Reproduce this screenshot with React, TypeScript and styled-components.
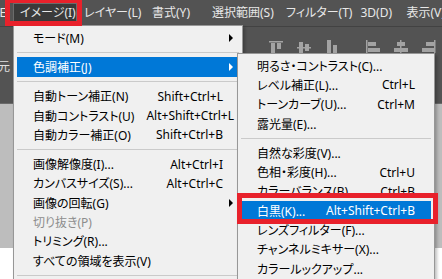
import React from 'react'
import styled, { createGlobalStyle } from 'styled-components'

const GlobalStyle = createGlobalStyle`
  html, body {
    margin: 0;
    padding: 0;
    background: #535353;
    overflow: hidden;
  }
  body {
    font-family: "Noto Sans", "Noto Sans CJK JP", sans-serif;
    font-feature-settings: "palt";
    -webkit-font-smoothing: antialiased;
  }
`

type Entry =
  | { kind: 'sep' }
  | {
      kind: 'item'
      label: string
      shortcut?: string
      sub?: boolean
      disabled?: boolean
      active?: boolean
    }

// top menu: label and slot width
const bar: [string, number][] = [
  ['編集(E)', 48],
  ['イメージ(I)', 64],
  ['レイヤー(L)', 68],
  ['書式(Y)', 60],
  ['選択範囲(S)', 74],
  ['フィルター(T)', 74],
  ['3D(D)', 46],
  ['表示(V)', 60],
]

const imageMenu: Entry[] = [
  { kind: 'item', label: 'モード(M)', sub: true },
  { kind: 'sep' },
  { kind: 'item', label: '色調補正(J)', sub: true, active: true },
  { kind: 'sep' },
  { kind: 'item', label: '自動トーン補正(N)', shortcut: 'Shift+Ctrl+L' },
  { kind: 'item', label: '自動コントラスト(U)', shortcut: 'Alt+Shift+Ctrl+L' },
  { kind: 'item', label: '自動カラー補正(O)', shortcut: 'Shift+Ctrl+B' },
  { kind: 'sep' },
  { kind: 'item', label: '画像解像度(I)...', shortcut: 'Alt+Ctrl+I' },
  { kind: 'item', label: 'カンバスサイズ(S)...', shortcut: 'Alt+Ctrl+C' },
  { kind: 'item', label: '画像の回転(G)', sub: true },
  { kind: 'item', label: '切り抜き(P)', disabled: true },
  { kind: 'item', label: 'トリミング(R)...' },
  { kind: 'item', label: 'すべての領域を表示(V)' },
  { kind: 'sep' },
]

const adjustMenu: Entry[] = [
  { kind: 'item', label: '明るさ・コントラスト(C)...' },
  { kind: 'item', label: 'レベル補正(L)...', shortcut: 'Ctrl+L' },
  { kind: 'item', label: 'トーンカーブ(U)...', shortcut: 'Ctrl+M' },
  { kind: 'item', label: '露光量(E)...' },
  { kind: 'sep' },
  { kind: 'item', label: '自然な彩度(V)...' },
  { kind: 'item', label: '色相・彩度(H)...', shortcut: 'Ctrl+U' },
  { kind: 'item', label: 'カラーバランス(B)...', shortcut: 'Ctrl+B' },
  { kind: 'item', label: '白黒(K)...', shortcut: 'Alt+Shift+Ctrl+B', active: true },
  { kind: 'item', label: 'レンズフィルター(F)...' },
  { kind: 'item', label: 'チャンネルミキサー(X)...' },
  { kind: 'item', label: 'カラールックアップ...' },
]

const App: React.FC = () => {
  return (
    <Screen>
      <GlobalStyle />
      <MenuBar>
        {bar.map(([t, w]) => (
          <BarItem key={t} w={w} open={t === 'イメージ(I)'}>
            {t}
          </BarItem>
        ))}
      </MenuBar>
      <OptionsBar>
        <ToolSep />
        <AlignIcon kind='top' />
        <AlignIcon kind='vcenter' />
        <AlignIcon kind='bottom' />
        <ToolSep />
        <AlignIcon kind='left' />
        <AlignIcon kind='hcenter' />
        <AlignIcon kind='right' />
        <ToolSep />
      </OptionsBar>
      <Workspace>
        <PanelStrip>
          <PanelLabel>元</PanelLabel>
        </PanelStrip>
        <Pasteboard />
        <Document />
      </Workspace>

      <DropMenu x={13} y={25} w={230}>
        <MenuList entries={imageMenu} />
      </DropMenu>
      <DropMenu x={237} y={53} w={198}>
        <MenuList entries={adjustMenu} />
      </DropMenu>

      <Callout x={5} y={-2} w={77} h={28} />
      <Callout x={237} y={193} w={201} h={31} />
    </Screen>
  )
}

const MenuList: React.FC<{ entries: Entry[] }> = ({ entries }) => (
  <>
    {entries.map((e, i) =>
      e.kind === 'sep' ? (
        <Separator key={i} />
      ) : (
        <Row key={i} active={e.active} disabled={e.disabled}>
          <Label>{e.label}</Label>
          {e.shortcut && <Shortcut>{e.shortcut}</Shortcut>}
          {e.sub && <Arrow active={e.active} />}
        </Row>
      )
    )}
  </>
)

type AlignKind = 'top' | 'vcenter' | 'bottom' | 'left' | 'hcenter' | 'right'

const AlignIcon: React.FC<{ kind: AlignKind }> = ({ kind }) => {
  const c = '#a3a3a3'
  const shapes: Record<AlignKind, React.ReactNode> = {
    top: (
      <>
        <rect x='0' y='1' width='14' height='1.5' fill={c} />
        <rect x='2' y='3' width='4' height='10' fill={c} />
        <rect x='8' y='3' width='4' height='6' fill={c} />
      </>
    ),
    vcenter: (
      <>
        <rect x='0' y='7' width='14' height='1.5' fill={c} />
        <rect x='2' y='2' width='4' height='11' fill={c} />
        <rect x='8' y='4' width='4' height='7' fill={c} />
      </>
    ),
    bottom: (
      <>
        <rect x='2' y='0' width='4' height='13' fill={c} />
        <rect x='8' y='5' width='4' height='8' fill={c} />
        <rect x='0' y='13' width='14' height='1.5' fill={c} />
      </>
    ),
    left: (
      <>
        <rect x='1' y='0' width='1.5' height='14' fill={c} />
        <rect x='3' y='2' width='8' height='4' fill={c} />
        <rect x='3' y='8' width='12' height='4' fill={c} />
      </>
    ),
    hcenter: (
      <>
        <rect x='7' y='0' width='1.5' height='14' fill={c} />
        <rect x='4' y='2' width='8' height='4' fill={c} />
        <rect x='1' y='8' width='14' height='4' fill={c} />
      </>
    ),
    right: (
      <>
        <rect x='13' y='0' width='1.5' height='14' fill={c} />
        <rect x='5' y='2' width='8' height='4' fill={c} />
        <rect x='1' y='8' width='12' height='4' fill={c} />
      </>
    ),
  }
  return (
    <IconSlot>
      <svg width='16' height='14' viewBox='0 0 16 14'>
        {shapes[kind]}
      </svg>
    </IconSlot>
  )
}

const Screen = styled.div`
  position: relative;
  width: 442px;
  height: 279px;
  overflow: hidden;
  background: #535353;
  display: flex;
  flex-direction: column;
`

const MenuBar = styled.div`
  display: flex;
  align-items: center;
  height: 26px;
  margin-left: -35px;
  background: #535353;
  flex-shrink: 0;
`

const BarItem = styled.div<{ w: number; open?: boolean }>`
  flex: 0 0 ${(p) => p.w}px;
  height: 20px;
  line-height: 18px;
  padding-left: 6px;
  font-size: 12px;
  color: #e8e8e8;
  white-space: nowrap;
  box-sizing: border-box;
  background: ${(p) => (p.open ? '#3a3a3a' : 'transparent')};
  border: 1px solid ${(p) => (p.open ? '#6b6b6b' : 'transparent')};
`

const OptionsBar = styled.div`
  display: flex;
  align-items: flex-end;
  height: 27px;
  padding-left: 257px;
  box-sizing: border-box;
  border-top: 1px solid #424242;
  background: #535353;
  flex-shrink: 0;
`

const ToolSep = styled.div`
  width: 1px;
  height: 24px;
  margin-right: 12px;
  background: #3c3c3c;
  align-self: flex-end;
`

const IconSlot = styled.div`
  display: flex;
  width: 16px;
  height: 14px;
  margin-right: 12px;
  margin-bottom: -1px;
`

const Workspace = styled.div`
  flex: 1;
  display: flex;
  flex-direction: column;
`

const PanelStrip = styled.div`
  height: 50px;
  background: #535353;
  border-bottom: 1px solid #6a6a6a;
`

const PanelLabel = styled.span`
  display: block;
  padding: 4px 0 0 0;
  margin-left: -2px;
  font-size: 12px;
  color: #e0e0e0;
`

const Pasteboard = styled.div`
  flex: 1;
  background: #bdbdbd;
`

const Document = styled.div`
  height: 31px;
  background: #ffffff;
`

const DropMenu = styled.div<{ x: number; y: number; w: number }>`
  position: absolute;
  left: ${(p) => p.x}px;
  top: ${(p) => p.y}px;
  width: ${(p) => p.w}px;
  padding: 2px 3px 3px;
  box-sizing: border-box;
  background: #f0f0f0;
  border: 1px solid #979797;
  box-shadow: 2px 2px 3px rgba(0, 0, 0, 0.25);
`

const Row = styled.div<{ active?: boolean; disabled?: boolean }>`
  position: relative;
  display: flex;
  align-items: center;
  height: 19.3px;
  padding: 0 16px 0 16px;
  font-size: 12px;
  white-space: nowrap;
  background: ${(p) => (p.active ? '#0078d7' : 'transparent')};
  color: ${(p) => (p.active ? '#ffffff' : p.disabled ? '#8d8d8d' : '#000000')};
`

const Label = styled.span`
  flex: 1 0 auto;
`

const Shortcut = styled.span`
  margin-left: 12px;
`

const Arrow = styled.span<{ active?: boolean }>`
  position: absolute;
  right: 6px;
  top: 50%;
  margin-top: -4px;
  width: 0;
  height: 0;
  border-top: 4px solid transparent;
  border-bottom: 4px solid transparent;
  border-left: 4px solid ${(p) => (p.active ? '#ffffff' : '#000000')};
`

const Separator = styled.div`
  height: 10px;
  display: flex;
  align-items: center;
  &::after {
    content: '';
    flex: 1;
    height: 1px;
    background: #cacaca;
  }
`

const Callout = styled.div<{ x: number; y: number; w: number; h: number }>`
  position: absolute;
  left: ${(p) => p.x}px;
  top: ${(p) => p.y}px;
  width: ${(p) => p.w}px;
  height: ${(p) => p.h}px;
  box-sizing: border-box;
  border: 5px solid #e8212b;
  pointer-events: none;
`

export default App
